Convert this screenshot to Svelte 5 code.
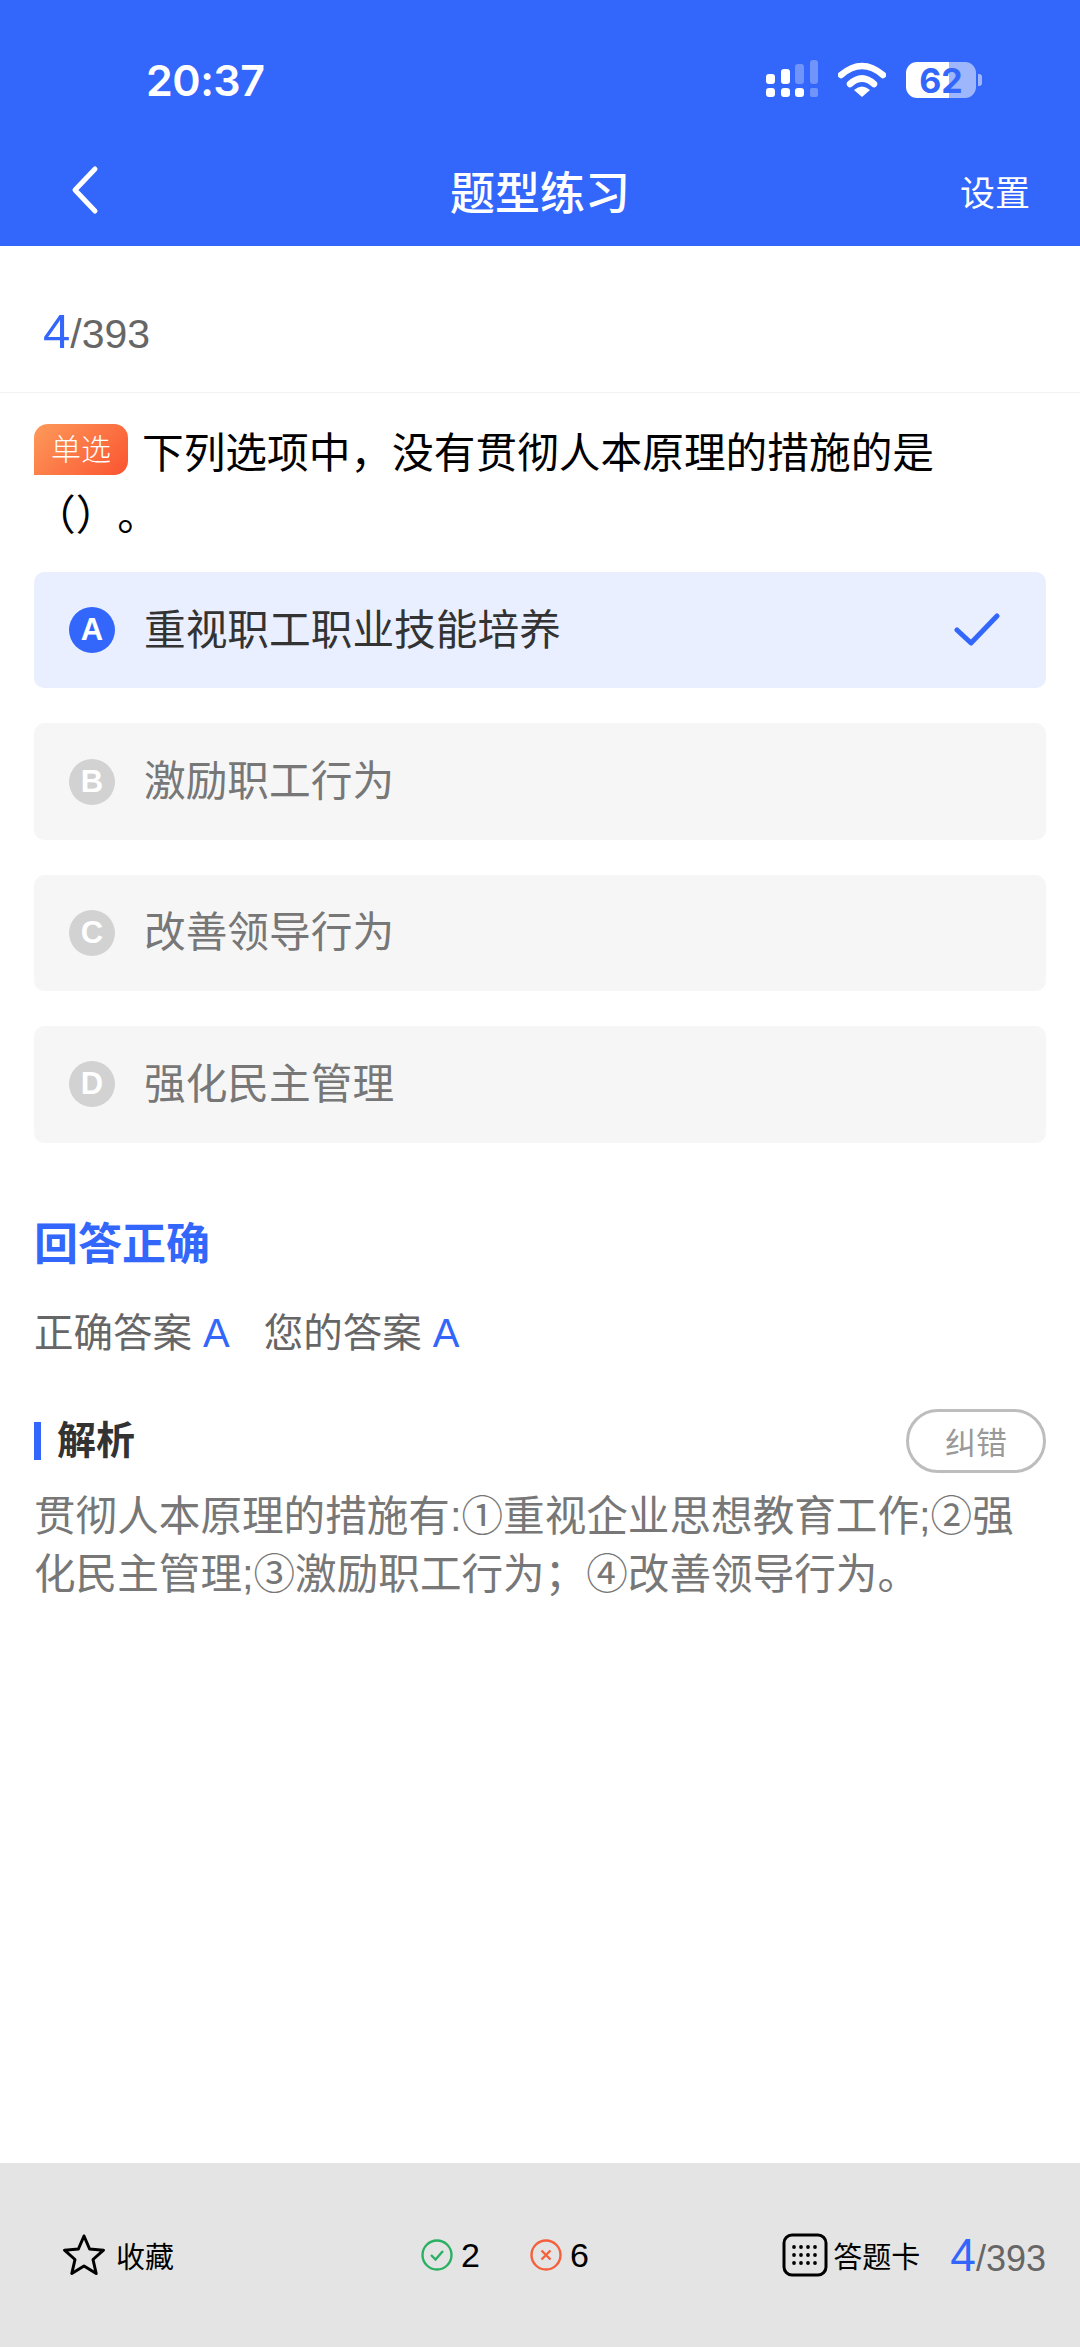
<script>
  const options = [
    { key: 'A', text: '重视职工职业技能培养', picked: true },
    { key: 'B', text: '激励职工行为' },
    { key: 'C', text: '改善领导行为' },
    { key: 'D', text: '强化民主管理' }
  ];
</script>

<div class="page">
  <header>
    <div class="status">
      <span class="time">20:37</span>
      <div class="status-icons">
        <svg width="52" height="40" viewBox="0 0 52 40">
          <g fill="#fff">
            <rect x="0" y="14" width="9" height="10" rx="3" />
            <rect x="15" y="9" width="9" height="15" rx="3" />
            <rect x="0" y="28" width="9" height="9" rx="3" />
            <rect x="15" y="28" width="9" height="9" rx="3" />
            <rect x="29" y="28" width="9" height="9" rx="3" />
          </g>
          <g fill="#fff" opacity="0.3">
            <rect x="29" y="4" width="9" height="20" rx="3" />
            <rect x="44" y="0" width="8" height="24" rx="3" />
            <rect x="44" y="28" width="8" height="9" rx="2" />
          </g>
        </svg>
        <svg class="wifi" width="48" height="36" viewBox="0 0 48 36">
          <path d="M3 13 Q24 -5 45 13" fill="none" stroke="#fff" stroke-width="6.5" stroke-linecap="round" />
          <path d="M12 22 Q24 11 36 22" fill="none" stroke="#fff" stroke-width="6.5" stroke-linecap="round" />
          <path d="M16 28 Q24 21 32 28 L24 35 Z" fill="#fff" />
        </svg>
        <div class="battery"><span>62</span></div>
        <div class="battery-tip"></div>
      </div>
    </div>
    <nav>
      <svg class="back" width="36" height="52" viewBox="0 0 36 52">
        <path d="M27 5 L7 26 L27 47" fill="none" stroke="#fff" stroke-width="5" stroke-linecap="round" stroke-linejoin="round" />
      </svg>
      <h1>题型练习</h1>
      <span class="settings">设置</span>
    </nav>
  </header>

  <div class="progress">
    <span class="count"><b>4</b>/393</span>
  </div>

  <section class="question">
    <p><span class="tag">单选</span>下列选项中，没有贯彻人本原理的措施的是</p>
    <p class="second">（）。</p>
  </section>

  <ul class="options">
    {#each options as opt}
      <li class:picked={opt.picked}>
        <span class="letter">{opt.key}</span>
        <span class="label">{opt.text}</span>
        {#if opt.picked}
          <svg width="46" height="34" viewBox="0 0 46 34">
            <path d="M3 17 L17 30 L43 3" fill="none" stroke="#3366fa" stroke-width="5" stroke-linecap="round" stroke-linejoin="round" />
          </svg>
        {/if}
      </li>
    {/each}
  </ul>

  <section class="result">
    <h2>回答正确</h2>
    <p class="answers">
      <span>正确答案 <em>A</em></span>
      <span>您的答案 <em>A</em></span>
    </p>
    <div class="analysis-head">
      <h3>解析</h3>
      <button>纠错</button>
    </div>
    <p class="analysis">贯彻人本原理的措施有:①重视企业思想教育工作;②强化民主管理;③激励职工行为；④改善领导行为。</p>
  </section>

  <footer>
    <div class="fav">
      <svg width="44" height="44" viewBox="0 0 44 44">
        <path d="M22 3 L27.6 16 L41.5 17.2 L31 26.5 L34.2 40.5 L22 33 L9.8 40.5 L13 26.5 L2.5 17.2 L16.4 16 Z" fill="none" stroke="#000" stroke-width="3" stroke-linejoin="round" />
      </svg>
      <span>收藏</span>
    </div>
    <div class="tally">
      <svg width="32" height="32" viewBox="0 0 32 32">
        <circle cx="16" cy="16" r="14.5" fill="none" stroke="#2bb063" stroke-width="2.4" />
        <path d="M10 16 L14.5 20.5 L22 12" fill="none" stroke="#2bb063" stroke-width="2.4" />
      </svg>
      <span class="num">2</span>
      <svg class="wrong" width="32" height="32" viewBox="0 0 32 32">
        <circle cx="16" cy="16" r="14.5" fill="none" stroke="#f5603c" stroke-width="2.4" />
        <path d="M11.5 11.5 L20.5 20.5 M20.5 11.5 L11.5 20.5" fill="none" stroke="#f5603c" stroke-width="2.4" />
      </svg>
      <span class="num">6</span>
    </div>
    <div class="card">
      <svg width="46" height="44" viewBox="0 0 46 44">
        <rect x="2" y="2" width="42" height="40" rx="8" fill="none" stroke="#000" stroke-width="3" />
        <g fill="#000">
          {#each [14, 22, 30] as y}
            {#each [12, 19, 26, 33] as x}
              <circle cx={x} cy={y} r="1.9" />
            {/each}
          {/each}
        </g>
      </svg>
      <span>答题卡</span>
    </div>
    <span class="count"><b>4</b>/393</span>
  </footer>
</div>

<style>
  :global(body) {
    margin: 0;
  }

  .page {
    width: 1080px;
    height: 2347px;
    display: flex;
    flex-direction: column;
    background: #fff;
    font-family: "Liberation Sans", "Noto Sans CJK SC", sans-serif;
  }

  header {
    height: 246px;
    flex: none;
    box-sizing: border-box;
    background: #3366fa;
    color: #fff;
  }

  .status {
    height: 80px;
    padding-top: 40px;
    display: flex;
    align-items: center;
    justify-content: space-between;
    padding-left: 146px;
    padding-right: 98px;
  }

  .time {
    font-family: Inter, sans-serif;
    font-size: 43px;
    font-weight: 600;
    letter-spacing: -0.5px;
  }

  .status-icons {
    display: flex;
    align-items: center;
  }

  .wifi {
    margin-left: 20px;
  }

  .battery {
    width: 70px;
    height: 36px;
    margin-left: 20px;
    border-radius: 11px;
    background: linear-gradient(90deg, #fff 0 62%, #9db6fc 62% 100%);
    display: flex;
    align-items: center;
    justify-content: center;
    color: #3366fa;
    font-family: Inter, sans-serif;
    font-size: 34px;
    font-weight: 700;
  }

  .battery-tip {
    width: 4px;
    height: 12px;
    margin-left: 2px;
    border-radius: 0 3px 3px 0;
    background: #9db6fc;
  }

  nav {
    display: flex;
    align-items: center;
    justify-content: space-between;
    height: 76px;
    margin-top: 32px;
    padding: 0 50px 0 68px;
  }

  .back {
    flex: none;
    width: 36px;
    margin-right: 346px;
  }

  nav h1 {
    margin: 0;
    font-size: 45px;
    font-weight: 500;
    white-space: nowrap;
  }

  .settings {
    margin-left: auto;
    font-size: 35px;
  }

  .progress {
    height: 147px;
    flex: none;
    box-sizing: border-box;
    padding: 57px 0 0 43px;
    border-bottom: 1px solid #f2f2f2;
  }

  .count {
    color: #666;
    font-size: 36px;
    font-weight: 300;
  }

  .progress .count {
    font-size: 41px;
  }

  .count b {
    color: #3366fa;
    font-size: 46px;
    font-weight: 400;
  }

  .progress .count b {
    font-size: 49px;
  }

  .question {
    padding: 30px 34px 0;
  }

  .question p {
    margin: 0;
    font-size: 41.7px;
    line-height: 62px;
    color: #000;
    white-space: nowrap;
    text-spacing-trim: space-all;
  }

  .tag {
    display: inline-block;
    vertical-align: top;
    width: 94px;
    height: 51px;
    margin: 1px 14px 0 0;
    border-radius: 14px 14px 14px 0;
    background: linear-gradient(135deg, #fd9a5a, #fb5430);
    color: #fff;
    font-size: 30px;
    font-weight: 300;
    line-height: 51px;
    text-align: center;
  }

  .options {
    list-style: none;
    margin: 25px 34px 0;
    padding: 0;
    display: flex;
    flex-direction: column;
    gap: 35px;
  }

  .options li {
    height: 116.4px;
    display: flex;
    align-items: center;
    box-sizing: border-box;
    padding: 0 46px 0 35px;
    border-radius: 10px;
    background: #f6f6f6;
    color: #777;
    font-size: 41.7px;
  }

  .options li.picked {
    background: #e9effe;
    color: #333;
  }

  .letter {
    width: 46px;
    height: 46px;
    flex: none;
    margin-right: 29px;
    border-radius: 50%;
    background: #d2d2d2;
    color: #fff;
    font-size: 31px;
    font-weight: 700;
    line-height: 46px;
    text-align: center;
  }

  .picked .letter {
    background: #3366fa;
  }

  .label {
    flex: 1;
    margin-top: -7px;
  }

  .result {
    padding: 0 34px;
  }

  h2 {
    margin: 70px 0 0;
    color: #3366fa;
    font-size: 44px;
    font-weight: 700;
    line-height: 64px;
  }

  .answers {
    display: flex;
    gap: 34px;
    margin: 28px 0 0;
    color: #666;
    font-size: 39.5px;
    line-height: 56px;
  }

  .answers em {
    color: #3366fa;
    font-style: normal;
    font-size: 40px;
    font-weight: 300;
  }

  .analysis-head {
    display: flex;
    align-items: center;
    justify-content: space-between;
    margin-top: 48px;
  }

  h3 {
    margin: 0;
    padding-left: 16px;
    border-left: 7px solid #3366fa;
    color: #333;
    font-size: 39px;
    font-weight: 700;
    line-height: 38px;
  }

  button {
    width: 140px;
    height: 64px;
    padding: 0;
    border: 3px solid #bdbdbd;
    border-radius: 32px;
    background: #fff;
    color: #999;
    font-family: inherit;
    font-size: 31px;
  }

  .analysis {
    margin: 15px 0 0;
    color: #777;
    font-size: 41.6px;
    line-height: 58px;
  }

  footer {
    margin-top: auto;
    height: 184px;
    flex: none;
    box-sizing: border-box;
    display: flex;
    align-items: center;
    padding: 0 34px 0 62px;
    background: #e4e4e4;
    color: #000;
    font-size: 29px;
  }

  .fav,
  .tally,
  .card {
    display: flex;
    align-items: center;
  }

  .fav span {
    margin-left: 10px;
  }

  .tally {
    margin-left: 247px;
  }

  .num {
    margin-left: 8px;
    font-size: 34px;
  }

  .wrong {
    margin-left: 50px;
  }

  .card {
    margin-left: auto;
  }

  .card span {
    margin-left: 5px;
  }

  footer .count {
    margin-left: 30px;
  }
</style>
